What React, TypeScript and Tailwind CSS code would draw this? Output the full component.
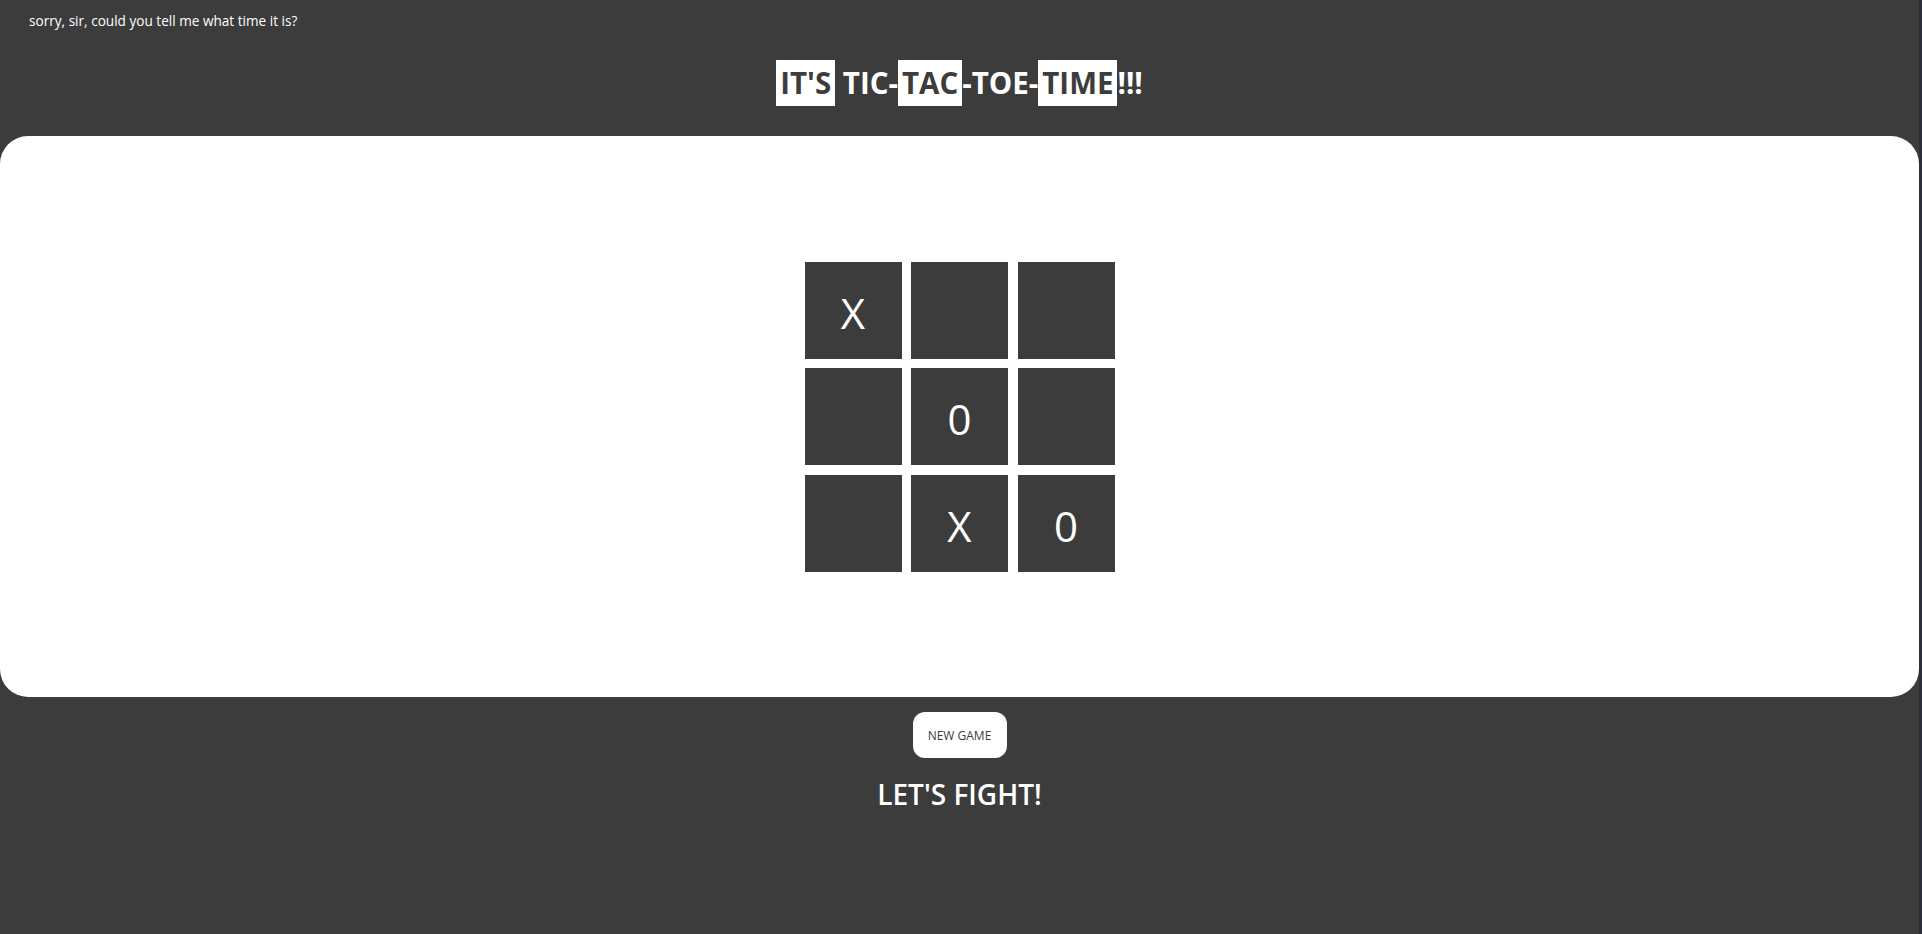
import React, { useState } from 'react';

type Cell = 'X' | '0' | '';

const initialBoard: Cell[] = ['X', '', '', '', '0', '', '', 'X', '0'];

const Highlight: React.FC<{ children: React.ReactNode }> = ({ children }) => (
  <span className="inline-block bg-white px-[4px] leading-[46px] text-[#3c3c3c]">{children}</span>
);

const App: React.FC = () => {
  const [board, setBoard] = useState<Cell[]>(initialBoard);

  return (
    <div className="min-h-[934px] border-r-[3px] border-[#2f2f3a] bg-[#3c3c3c] font-['Open_Sans',sans-serif] text-white">
      {/* question at the top */}
      <p className="pl-[29px] pt-[13px] text-[13.6px] leading-[16px]">sorry, sir, could you tell me what time it is?</p>

      {/* title */}
      <h1 className="mt-[31px] text-center text-[29.5px] font-bold leading-[46px]">
        <Highlight>IT'S</Highlight> TIC-<Highlight>TAC</Highlight>-TOE-<Highlight>TIME</Highlight>!!!
      </h1>

      {/* board panel */}
      <section className="mt-[30px] flex h-[561px] items-center justify-center rounded-[28px] bg-white">
        <div className="grid grid-cols-[repeat(3,97px)] grid-rows-[repeat(3,97px)] gap-[9.5px]">
          {board.map((cell, i) => (
            <button
              key={i}
              onClick={() => setBoard(b => b.map((c, j) => (j === i && !c ? 'X' : c)))}
              className="flex items-center justify-center bg-[#3c3c3c] pt-[4px] text-[42px] font-normal text-white"
            >
              {cell}
            </button>
          ))}
        </div>
      </section>

      {/* controls */}
      <div className="flex flex-col items-center">
        <button
          onClick={() => setBoard(initialBoard.map(() => ''))}
          className="mt-[15px] h-[46px] w-[94px] rounded-[12px] bg-white pt-[2px] text-[12px] text-[#3c3c3c]"
        >
          NEW GAME
        </button>
        <h2 className="mt-[16px] text-[28px] font-semibold leading-[40px]">LET'S FIGHT!</h2>
      </div>
    </div>
  );
};

export default App;
